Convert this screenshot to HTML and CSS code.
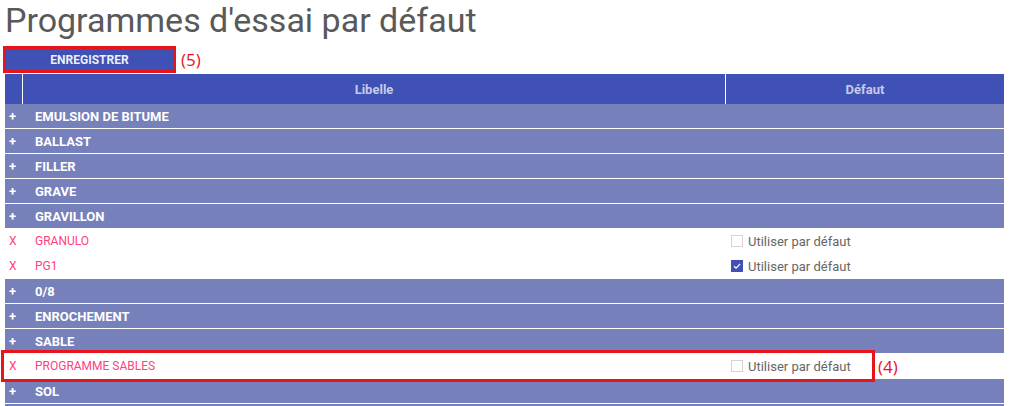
FILE: index.html
```html
<!DOCTYPE html>
<html lang="fr">
<head>
<meta charset="utf-8">
<title>Programmes d'essai par défaut</title>
<link rel="stylesheet" href="styles.css">
</head>
<body>
<h1 class="title">Programmes d'essai par défaut</h1>
<div class="savebar">
  <button class="btn-save" type="button">ENREGISTRER</button>
  <span class="callout-label">(5)</span>
</div>
<div class="grid">
  <div class="row head">
    <div class="c-tog"></div>
    <div class="c-lib">Libelle</div>
    <div class="c-def">Défaut</div>
  </div>
  <div class="row group"><div class="c-tog">+</div><div class="c-lib">EMULSION DE BITUME</div><div class="c-def"></div></div>
  <div class="row group"><div class="c-tog">+</div><div class="c-lib">BALLAST</div><div class="c-def"></div></div>
  <div class="row group"><div class="c-tog">+</div><div class="c-lib">FILLER</div><div class="c-def"></div></div>
  <div class="row group"><div class="c-tog">+</div><div class="c-lib">GRAVE</div><div class="c-def"></div></div>
  <div class="row group"><div class="c-tog">+</div><div class="c-lib">GRAVILLON</div><div class="c-def"></div></div>
  <div class="row item"><div class="c-tog">X</div><div class="c-lib">GRANULO</div><div class="c-def"><label class="chk"><span class="box"></span>Utiliser par défaut</label></div></div>
  <div class="row item"><div class="c-tog">X</div><div class="c-lib">PG1</div><div class="c-def"><label class="chk"><span class="box on"><svg viewBox="0 0 12 12" width="12" height="12"><path d="M3 6.2 L5.1 8.2 L9.2 3.9" fill="none" stroke="#fff" stroke-width="1.3"/></svg></span>Utiliser par défaut</label></div></div>
  <div class="row group"><div class="c-tog">+</div><div class="c-lib">0/8</div><div class="c-def"></div></div>
  <div class="row group"><div class="c-tog">+</div><div class="c-lib">ENROCHEMENT</div><div class="c-def"></div></div>
  <div class="row group"><div class="c-tog">+</div><div class="c-lib">SABLE</div><div class="c-def"></div></div>
  <div class="row item marked"><div class="c-tog">X</div><div class="c-lib">PROGRAMME SABLES</div><div class="c-def"><label class="chk"><span class="box"></span>Utiliser par défaut</label></div>
    <span class="callout-box"><span class="callout-label side">(4)</span></span>
  </div>
  <div class="row group"><div class="c-tog">+</div><div class="c-lib">SOL</div><div class="c-def"></div></div>
  <div class="row group tail"><div class="c-tog"></div><div class="c-lib"></div><div class="c-def"></div></div>
</div>
</body>
</html>
```

FILE: styles.css
```css
html, body {
  overflow: hidden;
}
body {
  margin: 0;
  padding: 0 7px 0 5px;
  background: #fff;
  font-family: Roboto, "Liberation Sans", sans-serif;
}
.title {
  margin: 0;
  font-size: 34px;
  font-weight: 400;
  line-height: 40px;
  color: #595959;
}
.savebar {
  display: flex;
  align-items: center;
  height: 28px;
  margin-top: 6px;
}
.btn-save {
  box-sizing: border-box;
  width: 173px;
  height: 27px;
  margin: 0 0 1px -2px;
  border: 3px solid #e8141c;
  background: #3f51b5;
  color: #eceef9;
  font-family: Roboto, "Liberation Sans", sans-serif;
  font-size: 12px;
  font-weight: 700;
  padding: 0;
}
.callout-label {
  font-family: "Open Sans", "Liberation Sans", sans-serif;
  font-size: 17px;
  color: #e8141c;
  margin-left: 5px;
  line-height: 20px;
}
.grid {
  width: 999px;
}
.row {
  display: flex;
  box-sizing: border-box;
  height: 25px;
  font-size: 13px;
  align-items: stretch;
}
.row > div {
  box-sizing: border-box;
  display: flex;
  align-items: center;
}
.c-tog {
  width: 18px;
  padding-left: 4px;
}
.c-lib {
  width: 703px;
  padding-left: 12px;
}
.c-def {
  width: 278px;
  padding-left: 5px;
}
.head {
  height: 30px;
  background: #3f51b5;
  color: #c5cae9;
  font-weight: 700;
}
.head > div {
  justify-content: center;
}
.head .c-tog,
.head .c-lib {
  border-right: 1px solid #fff;
}
.head .c-lib,
.head .c-def {
  padding-left: 0;
}
.group {
  background: #7680bb;
  color: #fff;
  font-weight: 700;
  border-bottom: 1px solid #fff;
}
.item {
  background: #fff;
  color: #ff4081;
  font-size: 12px;
  border-bottom: 1px solid #fff;
}
.chk {
  display: flex;
  align-items: center;
  color: #666;
  font-size: 13px;
}
.box {
  box-sizing: border-box;
  width: 12px;
  height: 12px;
  border: 1px solid #d4d4d4;
  background: #fff;
  margin-right: 5px;
  display: flex;
}
.box.on {
  border: 0;
  background: #3f51b5;
}
.marked {
  position: relative;
}
.callout-box {
  position: absolute;
  left: -4px;
  top: -4px;
  width: 874px;
  height: 32px;
  box-sizing: border-box;
  border: 3px solid #e8141c;
}
.callout-label.side {
  position: absolute;
  left: 100%;
  top: 4px;
  margin-left: 6px;
}
```
